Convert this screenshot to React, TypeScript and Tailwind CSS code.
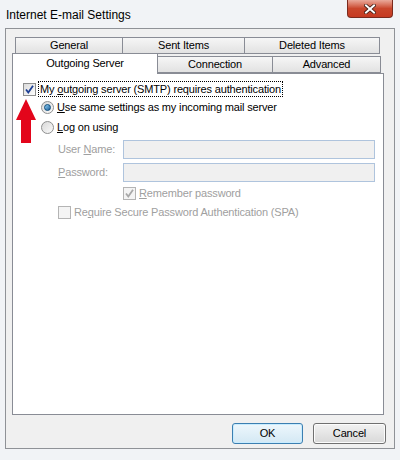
import React from "react";

const font = { fontFamily: '"Liberation Sans", Arial, sans-serif' };

const Check = ({ checked, disabled }: { checked?: boolean; disabled?: boolean }) => (
  <span
    className={
      "relative flex h-[13px] w-[13px] shrink-0 items-center justify-center border " +
      (disabled
        ? "border-[#b4b4b4] bg-[#f4f4f4]"
        : "border-[#8e8f8f] bg-gradient-to-br from-[#dcdcdc] to-[#fdfdfd]")
    }
  >
    {checked && (
      <svg width="11" height="11" viewBox="0 0 11 11">
        <path
          d="M2 5.5 L4.3 8.5 L9 1.8"
          fill="none"
          stroke={disabled ? "#a8a8a8" : "#1c3f94"}
          strokeWidth="1.8"
        />
      </svg>
    )}
  </span>
);

const Radio = ({ checked }: { checked?: boolean }) => (
  <span className="flex h-[13px] w-[13px] shrink-0 items-center justify-center rounded-full border border-[#8e8f8f] bg-gradient-to-br from-[#d8d8d8] to-[#fbfbfb]">
    {checked && (
      <span className="h-[7px] w-[7px] rounded-full border border-[#0a4a7a] bg-gradient-to-br from-[#8fd0f5] to-[#1a5f99]" />
    )}
  </span>
);

const Tab = ({ label, w, selected }: { label: string; w: string; selected?: boolean }) => (
  <div
    className={
      "flex items-center justify-center border border-[#898c95] " +
      w +
      (selected
        ? " h-[21px] border-b-0 bg-white"
        : " h-[17px] bg-gradient-to-b from-[#f6f6f6] to-[#e2e2e2]")
    }
  >
    {label}
  </div>
);

export default function App() {
  return (
    <div
      className="relative flex h-[460px] w-[400px] flex-col bg-[#f1f3f6] text-[11px] tracking-[-0.16px] text-black"
      style={font}
    >
      {/* title bar */}
      <div className="flex h-[28px] shrink-0 items-start justify-between">
        <div className="pl-[6px] pt-[6px] text-[12px] tracking-normal text-black">Internet E-mail Settings</div>
        <div className="mr-[7px] flex h-[18px] w-[46px] items-center justify-center rounded-b-[4px] border border-t-0 border-[#7a2a1e] bg-gradient-to-b from-[#e9a99b] via-[#c9462c] to-[#c53a22]">
          <svg width="12" height="10" viewBox="0 0 12 10">
            <path d="M2 1.5 L10 8.5 M10 1.5 L2 8.5" stroke="#3c1a12" strokeWidth="3.6" strokeLinecap="square" />
            <path d="M2 1.5 L10 8.5 M10 1.5 L2 8.5" stroke="#ffffff" strokeWidth="2" strokeLinecap="square" />
          </svg>
        </div>
      </div>

      {/* client area */}
      <div className="mx-[5px] mb-[11px] flex flex-1 flex-col border border-[#8f9297] bg-[#f0f0f0] px-[6px] pt-[8px]">
        {/* tabs */}
        <div className="flex flex-col">
          <div className="ml-[3px] flex w-[366px]">
            <Tab label="General" w="w-[108px]" />
            <Tab label="Sent Items" w="w-[123px] -ml-px" />
            <Tab label="Deleted Items" w="w-[136px] -ml-px" />
          </div>
          <div className="-mt-px flex items-end">
            <div className="relative z-10 -mb-px flex h-[21px] w-[146px] items-start justify-center border border-b-0 border-[#898c95] bg-white pt-[1px]">
              Outgoing Server
            </div>
            <div className="flex">
              <Tab label="Connection" w="w-[116px] -ml-px" />
              <Tab label="Advanced" w="w-[109px] -ml-px" />
            </div>
          </div>
        </div>

        {/* panel */}
        <div className="h-[342px] w-[372px] border border-[#898c95] bg-white pl-[10px] pt-[7px]">
          <div className="flex h-[16px] items-center">
            <Check checked />
            <span className="ml-[2px] border border-dotted border-black px-[1px] leading-[14px]">
              My <u>o</u>utgoing server (SMTP) requires authentication
            </span>
          </div>
          <div className="ml-[18px] mt-[2px] flex h-[16px] items-center gap-[3px]">
            <Radio checked />
            <span>
              <u>U</u>se same settings as my incoming mail server
            </span>
          </div>
          <div className="ml-[18px] mt-[4px] flex h-[16px] items-center gap-[3px]">
            <Radio />
            <span>
              <u>L</u>og on using
            </span>
          </div>
          <div className="ml-[35px] mt-[5px] flex h-[19px] items-center text-[#a0a0a0]">
            <span className="w-[65px]">
              User <u>N</u>ame:
            </span>
            <div className="h-[19px] w-[252px] border border-[#afc4dd] bg-[#f0f0f0]" />
          </div>
          <div className="ml-[35px] mt-[4px] flex h-[19px] items-center text-[#a0a0a0]">
            <span className="w-[65px]">
              <u>P</u>assword:
            </span>
            <div className="h-[19px] w-[252px] border border-[#afc4dd] bg-[#f0f0f0]" />
          </div>
          <div className="ml-[100px] mt-[3px] flex h-[16px] items-center gap-[3px] text-[#a0a0a0]">
            <Check checked disabled />
            <span>
              <u>R</u>emember password
            </span>
          </div>
          <div className="ml-[35px] mt-[3px] flex h-[16px] items-center gap-[3px] text-[#a0a0a0]">
            <Check disabled />
            <span>
              Re<u>q</u>uire Secure Password Authentication (SPA)
            </span>
          </div>
        </div>

        {/* buttons */}
        <div className="mt-[8px] flex justify-end gap-[10px] pr-[2px]">
          <button className="h-[21px] w-[71px] rounded-[3px] border border-[#3c7fb1] bg-gradient-to-b from-[#eef7fc] to-[#d3e8f4] shadow-[inset_0_0_0_1px_#c8ecff]">
            OK
          </button>
          <button className="h-[21px] w-[73px] rounded-[3px] border border-[#707070] bg-gradient-to-b from-[#f2f2f2] to-[#d8d8d8] shadow-[inset_0_0_0_1px_#fcfcfc]">
            Cancel
          </button>
        </div>
      </div>

      {/* red annotation arrow */}
      <svg className="absolute left-[15px] top-[98px]" width="22" height="46" viewBox="0 0 22 46">
        <path d="M11 1 L21 22 L16 22 L16 45 L6 45 L6 22 L1 22 Z" fill="#e3051b" />
      </svg>
    </div>
  );
}
